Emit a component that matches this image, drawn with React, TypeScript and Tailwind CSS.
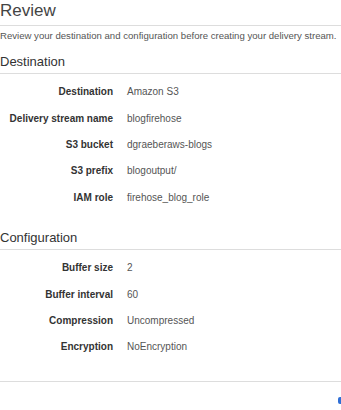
import React from "react";

const destination: ReadonlyArray<[string, string]> = [
  ["Destination", "Amazon S3"],
  ["Delivery stream name", "blogfirehose"],
  ["S3 bucket", "dgraeberaws-blogs"],
  ["S3 prefix", "blogoutput/"],
  ["IAM role", "firehose_blog_role"],
];

const configuration: ReadonlyArray<[string, string]> = [
  ["Buffer size", "2"],
  ["Buffer interval", "60"],
  ["Compression", "Uncompressed"],
  ["Encryption", "NoEncryption"],
];

function DetailRows({ rows }: { readonly rows: ReadonlyArray<[string, string]> }) {
  return (
    <div className="flex flex-col pt-[5px]">
      {rows.map(([label, value]) => (
        <div key={label} className="flex items-center h-[26.4px] text-[10px] leading-[14px] whitespace-nowrap">
          <span className="w-[113px] shrink-0 text-right font-bold text-[#333]">{label}</span>
          <span className="ml-[14px] text-[#555]">{value}</span>
        </div>
      ))}
    </div>
  );
}

export default function App() {
  return (
    <div
      className="w-[341px] h-[410px] bg-white overflow-hidden flex flex-col"
      style={{ fontFamily: '"Liberation Sans", Arial, sans-serif' }}
    >
      <div className="h-[26px] border-b border-[#dddddd] text-[17px] leading-[22px] text-[#444]">
        Review
      </div>
      <p className="mt-[3px] text-[9.6px] leading-[14px] text-[#555] whitespace-nowrap">
        Review your destination and configuration before creating your delivery stream.
      </p>

      <div className="mt-[10px] pb-[2px] border-b border-[#dddddd] text-[13px] leading-[18px] text-[#333]">
        Destination
      </div>
      <DetailRows rows={destination} />

      <div className="mt-[18px] pb-[2px] border-b border-[#dddddd] text-[13px] leading-[18px] text-[#333]">
        Configuration
      </div>
      <DetailRows rows={configuration} />

      <div className="mt-[20px] border-b border-[#dddddd]" />
      <div className="flex justify-end mt-[15px]">
        <div className="w-[3px] h-[7px] rounded-l-[2px] bg-[#2f6fd6]" />
      </div>
    </div>
  );
}
